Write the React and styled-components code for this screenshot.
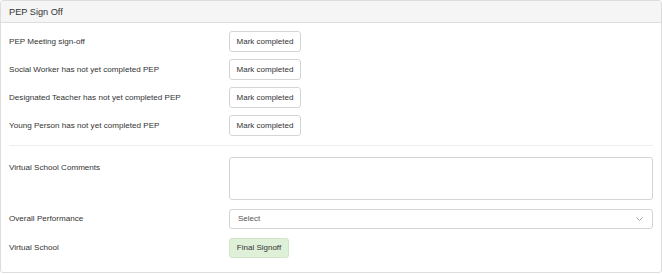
import React from "react";
import styled, { createGlobalStyle } from "styled-components";

const Global = createGlobalStyle`
  * { box-sizing: border-box; }
  body { margin: 0; background: #fff; font-family: "Liberation Sans", Arial, sans-serif; color: #333; }
`;

const Panel = styled.section`
  width: 662px;
  height: 273px;
  border: 1px solid #dddddd;
  border-radius: 3px;
  background: #fff;
  overflow: hidden;
`;

const Header = styled.header`
  height: 22px;
  background: #f5f5f5;
  border-bottom: 1px solid #dddddd;
  display: flex;
  align-items: center;
  padding: 0 8px;
  font-family: "Liberation Sans", Arial, sans-serif;
  font-size: 9.2px;
  color: #333;
`;

const Body = styled.div`
  padding: 8px 8px 0 8px;
  display: flex;
  flex-direction: column;
`;

const Group = styled.div`
  display: flex;
  flex-direction: column;
  gap: ${(p) => p.$gap}px;
`;

const Row = styled.div`
  display: grid;
  grid-template-columns: 220px 1fr;
  align-items: ${(p) => (p.$top ? "start" : "center")};
  min-height: 21px;
`;

const Label = styled.div`
  font-family: "Liberation Sans", Arial, sans-serif;
  font-size: 8.1px;
  color: #333;
  padding-top: ${(p) => (p.$top ? 6 : 0)}px;
`;

const Button = styled.button`
  justify-self: start;
  height: ${(p) => (p.$success ? 20 : 21)}px;
  width: ${(p) => (p.$success ? 60 : 72)}px;
  padding: 0;
  font-family: "Liberation Sans", Arial, sans-serif;
  font-size: 8px;
  color: #333;
  background: ${(p) => (p.$success ? "#dff0d8" : "#fff")};
  border: 1px solid ${(p) => (p.$success ? "#d0e6c4" : "#d4d4d4")};
  border-radius: 3px;
  cursor: pointer;
`;

const Divider = styled.hr`
  border: 0;
  border-top: 1px solid #eeeeee;
  margin: 9px 0 11px 0;
  height: 0;
`;

const TextArea = styled.textarea`
  display: block;
  height: 43px;
  width: 100%;
  resize: none;
  border: 1px solid #d4d4d4;
  border-radius: 3px;
  font-family: "Liberation Sans", Arial, sans-serif;
`;

const SelectBox = styled.div`
  height: 20px;
  width: 100%;
  border: 1px solid #d4d4d4;
  border-radius: 3px;
  display: flex;
  align-items: center;
  justify-content: space-between;
  padding: 0 9px 0 8px;
  font-family: "Liberation Sans", Arial, sans-serif;
  font-size: 8px;
  color: #555;
`;

const Chevron = () => (
  <svg width="7" height="4" viewBox="0 0 7 4" fill="none">
    <path d="M0.5 0.5 L3.5 3.5 L6.5 0.5" stroke="#999" strokeWidth="0.9" />
  </svg>
);

const items = [
  "PEP Meeting sign-off",
  "Social Worker has not yet completed PEP",
  "Designated Teacher has not yet completed PEP",
  "Young Person has not yet completed PEP",
];

export default function App() {
  return (
    <>
      <Global />
      <Panel>
        <Header>PEP Sign Off</Header>
        <Body>
          <Group $gap={7}>
            {items.map((t) => (
              <Row key={t}>
                <Label>{t}</Label>
                <Button>Mark completed</Button>
              </Row>
            ))}
          </Group>
          <Divider />
          <Group $gap={8}>
            <Row $top>
              <Label $top>Virtual School Comments</Label>
              <TextArea />
            </Row>
            <Row>
              <Label>Overall Performance</Label>
              <SelectBox>
                <span>Select</span>
                <Chevron />
              </SelectBox>
            </Row>
            <Row>
              <Label>Virtual School</Label>
              <Button $success>Final Signoff</Button>
            </Row>
          </Group>
        </Body>
      </Panel>
    </>
  );
}
